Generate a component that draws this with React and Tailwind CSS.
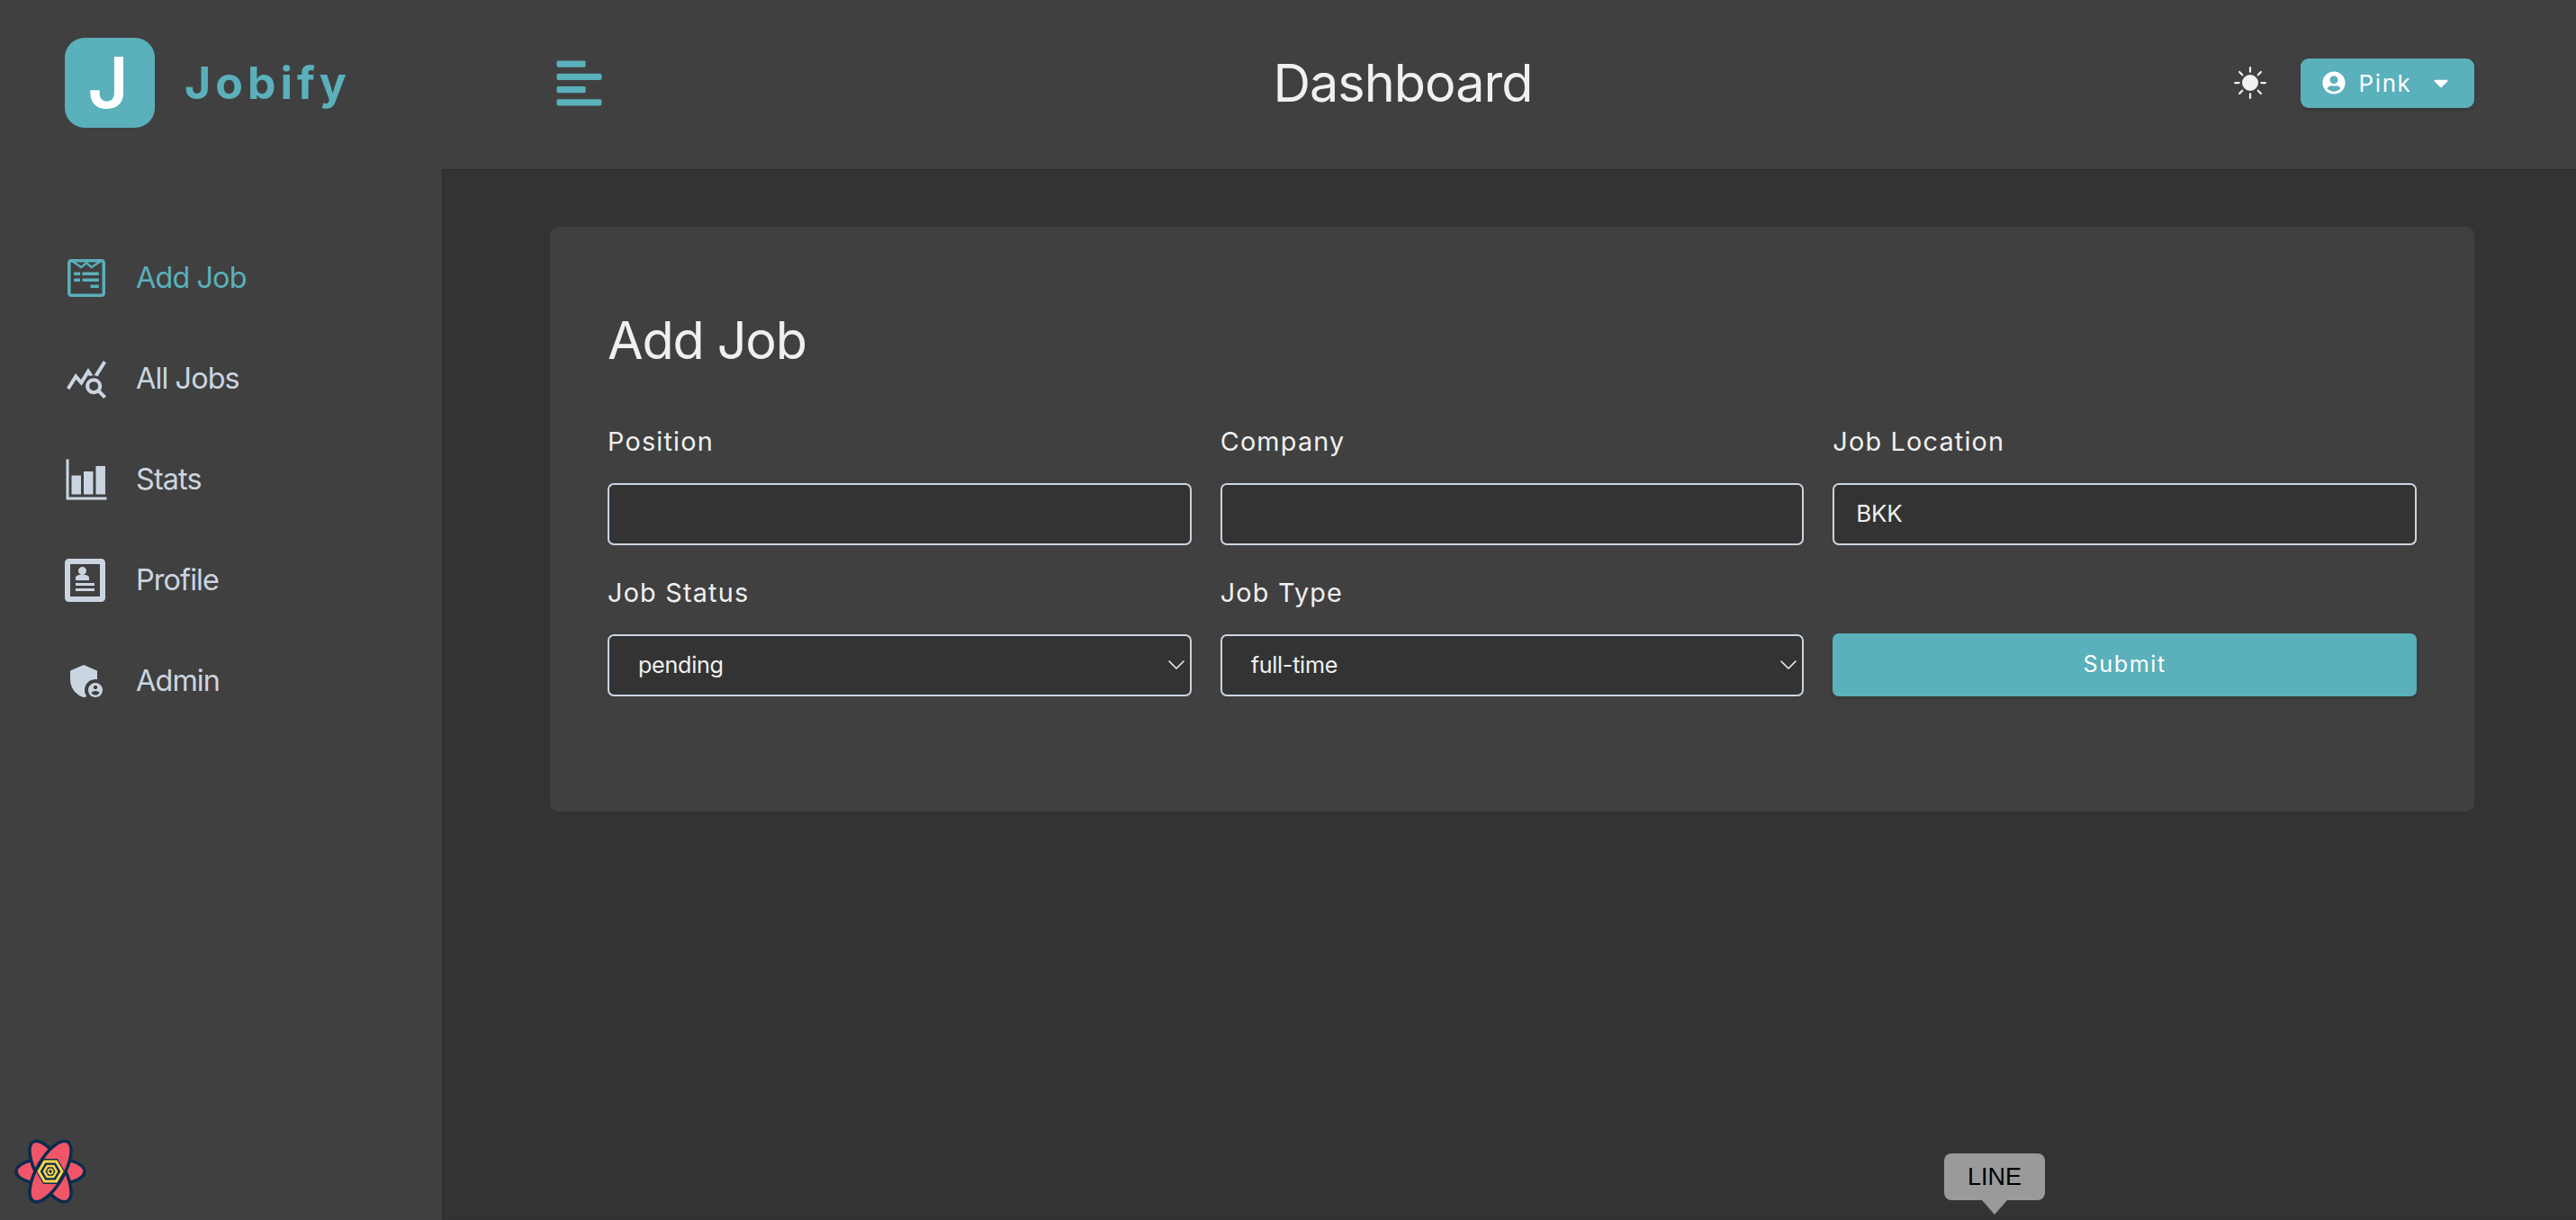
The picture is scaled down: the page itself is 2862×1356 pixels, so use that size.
import { FaAlignLeft, FaCaretDown, FaUserCircle, FaWpforms } from "react-icons/fa"
import { BsSunFill } from "react-icons/bs"
import { ImProfile } from "react-icons/im"
import { IoBarChartSharp } from "react-icons/io5"
import { MdAdminPanelSettings, MdQueryStats } from "react-icons/md"
import { ChevronDown } from "lucide-react"

const links = [
    { text: "Add Job", icon: <FaWpforms size={48} />, active: true },
    { text: "All Jobs", icon: <MdQueryStats size={48} /> },
    { text: "Stats", icon: <IoBarChartSharp size={48} /> },
    { text: "Profile", icon: <ImProfile size={48} /> },
    { text: "Admin", icon: <MdAdminPanelSettings size={48} /> },
]

function Sidebar() {
    return (
        <aside className="relative w-[491px] shrink-0 bg-[#404040]">
            <div className="h-[188px] pb-[4px] flex items-center pl-[72px] gap-[33px]">
                <div className="w-[100px] h-[100px] rounded-[22px] bg-[#5AB0BB] flex items-center justify-center">
                    <span className="text-white text-[78px] font-semibold font-['Inter',sans-serif] leading-none -ml-1">J</span>
                </div>
                <span className="text-[#5AB0BB] text-[50px] font-bold tracking-[5px] font-['Inter',sans-serif] leading-none">Jobify</span>
            </div>
            <nav className="pt-[65px] flex flex-col">
                {links.map((link) => (
                    <a
                        key={link.text}
                        href="#"
                        className={`h-[112px] pl-[72px] flex items-center gap-[31px] text-[32.4px] tracking-[-0.9px] ${link.active ? "text-[#5AB0BB]" : "text-[#CBD5E1]"}`}
                    >
                        {link.icon}
                        {link.text}
                    </a>
                ))}
            </nav>
        </aside>
    )
}

function Navbar() {
    return (
        <header className="h-[188px] shrink-0 bg-[#404040] pb-[4px] pl-[124px] pr-[113px] flex items-center justify-between">
            <FaAlignLeft size={57} className="text-[#5AB0BB]" />
            <h4 className="text-[57.6px] leading-none tracking-[-1px] text-[#F0F0F0] mr-[4px] pt-[2px]">Dashboard</h4>
            <div className="w-[300px] flex items-center justify-end gap-[38px]">
                <BsSunFill size={36} className="text-[#F0F0F0]" />
                <button className="w-[193px] h-[55px] rounded-[9px] bg-[#5AB0BB] text-white text-[26px] tracking-[1.6px] flex items-center justify-center gap-[15px] shadow-md">
                    <FaUserCircle size={26} />
                    Pink
                    <FaCaretDown size={26} className="ml-[5px]" />
                </button>
            </div>
        </header>
    )
}

function Field({ label, value }) {
    return (
        <div>
            <label className="block h-[52px] mb-[20px] text-[28.8px] leading-[52px] tracking-[1.2px] text-[#F0F0F0]">{label}</label>
            <input
                type="text"
                defaultValue={value}
                className="w-full h-[69px] px-[24px] pb-[2px] rounded-[7px] bg-[#333333] border-2 border-[#CBD5E1] text-[26px] tracking-[-0.3px] text-[#F0F0F0]"
            />
        </div>
    )
}

function SelectField({ label, value }) {
    return (
        <div>
            <label className="block h-[52px] mb-[20px] text-[28.8px] leading-[52px] tracking-[1.2px] text-[#F0F0F0]">{label}</label>
            <div className="relative">
                <select
                    defaultValue={value}
                    className="w-full h-[69px] pl-[32px] rounded-[7px] bg-[#333333] border-2 border-[#CBD5E1] text-[25.2px] tracking-[-0.3px] text-[#F0F0F0] appearance-none"
                >
                    <option>{value}</option>
                </select>
                <ChevronDown size={32} strokeWidth={1.2} className="absolute right-[1px] top-[18px] text-[#F0F0F0] pointer-events-none" />
            </div>
        </div>
    )
}

function AddJob() {
    return (
        <main className="flex-1 bg-[#333333] pt-[64px] pl-[120px] pr-[113px] shadow-[inset_1px_1px_2px_rgba(0,0,0,0.15)]">
            <section className="h-[650px] rounded-[9px] bg-[#404040] px-[64px] pt-[83px]">
                <h4 className="h-[86px] mb-[44px] text-[57.6px] leading-[86px] tracking-[-1.2px] text-[#F0F0F0]">Add Job</h4>
                <form className="grid grid-cols-3 gap-x-[32px] gap-y-[27px]">
                    <Field label="Position" value="" />
                    <Field label="Company" value="" />
                    <Field label="Job Location" value="BKK" />
                    <SelectField label="Job Status" value="pending" />
                    <SelectField label="Job Type" value="full-time" />
                    <button type="button" className="self-end h-[70px] rounded-[7px] bg-[#5AB0BB] text-white text-[25.2px] tracking-[1.6px] shadow-md">Submit</button>
                </form>
            </section>
        </main>
    )
}

function QueryLogo() {
    return (
        <svg viewBox="0 0 80 72" className="absolute left-[16px] bottom-[18px] w-[80px] h-[72px]">
            <g fill="#F05668" stroke="#0B2B4F" strokeWidth="3.5">
                <ellipse cx="40" cy="36" rx="38" ry="15" />
                <ellipse cx="40" cy="36" rx="38" ry="15" transform="rotate(60 40 36)" />
                <ellipse cx="40" cy="36" rx="38" ry="15" transform="rotate(120 40 36)" />
            </g>
            <polygon points="24,36 32,22 48,22 56,36 48,50 32,50" fill="#0B2B4F" />
            <polygon points="27,36 33.5,25 46.5,25 53,36 46.5,47 33.5,47" fill="none" stroke="#FCD34D" strokeWidth="3" />
            <polygon points="33,36 36.5,30 43.5,30 47,36 43.5,42 36.5,42" fill="none" stroke="#FCD34D" strokeWidth="2.5" />
            <circle cx="40" cy="36" r="2.6" fill="none" stroke="#FCD34D" strokeWidth="1.8" />
        </svg>
    )
}

function LineTooltip() {
    return (
        <div className="absolute left-[2160px] top-[1282px] w-[112px]">
            <div className="h-[52px] rounded-[8px] bg-[#9A9A9A] flex items-center justify-center text-[27px] text-black font-['Liberation_Sans',sans-serif]">LINE</div>
            <div className="mx-auto w-[28px] h-[16px] bg-[#9A9A9A] [clip-path:polygon(0_0,100%_0,50%_100%)]"></div>
        </div>
    )
}

function App() {
    return (
        <div className="relative h-screen overflow-hidden flex font-['Inter',sans-serif]">
            <Sidebar />
            <div className="flex-1 flex flex-col">
                <Navbar />
                <AddJob />
            </div>
            <QueryLogo />
            <LineTooltip />
        </div>
    )
}

export default App
